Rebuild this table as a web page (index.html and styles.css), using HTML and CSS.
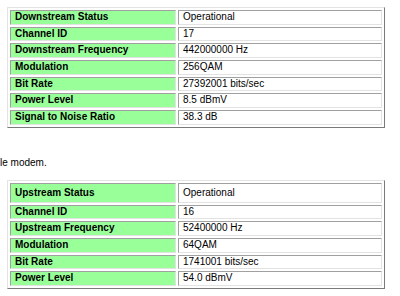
FILE: index.html
```html
<!DOCTYPE html>
<html>
<head>
<meta charset="utf-8">
<link rel="stylesheet" href="styles.css">
</head>
<body>
<table class="grid">
<tr><td class="lbl">Downstream Status</td><td class="val">Operational</td></tr>
<tr><td class="lbl">Channel ID</td><td class="val">17</td></tr>
<tr><td class="lbl">Downstream Frequency</td><td class="val">442000000 Hz</td></tr>
<tr><td class="lbl">Modulation</td><td class="val">256QAM</td></tr>
<tr><td class="lbl">Bit Rate</td><td class="val">27392001 bits/sec</td></tr>
<tr><td class="lbl">Power Level</td><td class="val">8.5 dBmV</td></tr>
<tr><td class="lbl">Signal to Noise Ratio</td><td class="val">38.3 dB</td></tr>
</table>
<p class="note">le modem.</p>
<table class="grid second">
<tr class="tall"><td class="lbl">Upstream Status</td><td class="val">Operational</td></tr>
<tr><td class="lbl">Channel ID</td><td class="val">16</td></tr>
<tr><td class="lbl">Upstream Frequency</td><td class="val">52400000 Hz</td></tr>
<tr><td class="lbl">Modulation</td><td class="val">64QAM</td></tr>
<tr><td class="lbl">Bit Rate</td><td class="val">1741001 bits/sec</td></tr>
<tr><td class="lbl">Power Level</td><td class="val">54.0 dBmV</td></tr>
</table>
</body>
</html>
```
FILE: styles.css
```css
html, body {
  margin: 0;
  padding: 0;
  background: #ffffff;
}
body {
  padding-top: 7px;
  font-family: "Liberation Sans", Arial, sans-serif;
  font-size: 10px;
  color: #000;
}
.grid {
  margin-left: 7px;
  width: 378px;
  border-collapse: separate;
  border-spacing: 2px;
  border: 1px solid;
  border-color: #e4e4e4 #7a7a7a #7a7a7a #e4e4e4;
}
.grid td {
  padding: 0 4px;
  line-height: 12.67px;
  border: 1px solid;
  border-color: #a0a0a0 #e2e2e2 #e2e2e2 #a0a0a0;
  white-space: nowrap;
}
.grid .lbl {
  width: 156px;
  background: #99ff99;
  font-weight: bold;
}
.grid .tall td {
  line-height: 18px;
}
.note {
  margin: 29px 0 0 0;
  line-height: 12px;
}
.second {
  margin-top: 11px;
}
```
